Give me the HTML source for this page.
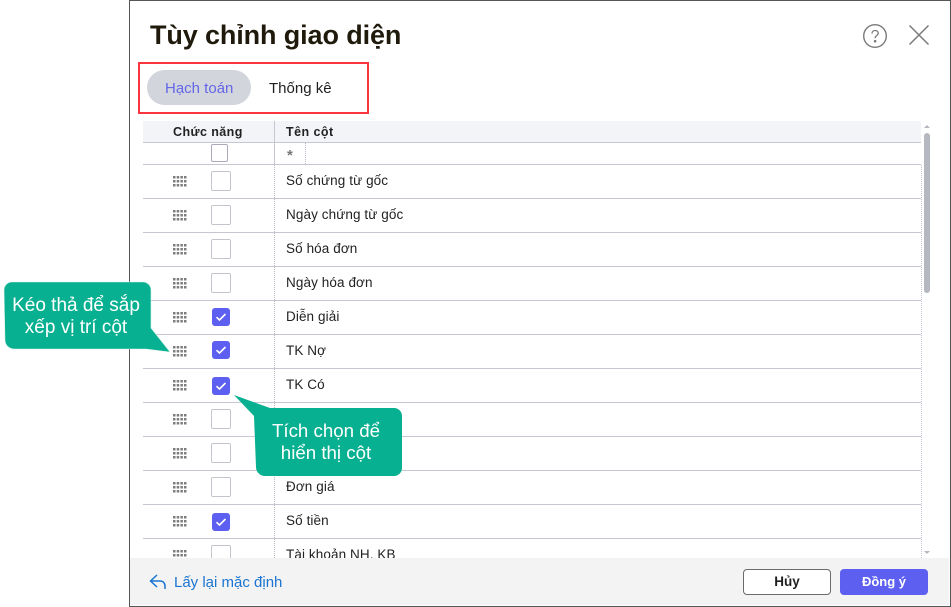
<!DOCTYPE html>
<html>
<head>
<meta charset="utf-8">
<style>
html,body{margin:0;padding:0;background:#fff}
body{width:951px;height:607px;position:relative;overflow:hidden;font-family:"Liberation Sans","Noto Sans CJK JP",sans-serif;color:#1f1f1f}
.a{position:absolute}
#dlg{left:129px;top:0;width:820px;height:605px;border:1px solid #555;background:#fff}
.line{position:absolute;left:143px;width:778px;height:1px;background:#c6c7d3}
.t{position:absolute;left:286px;font-size:13.5px;line-height:16px;white-space:nowrap;letter-spacing:.1px;color:#222}
.cb{position:absolute;left:211px;width:18px;height:18px;border:1px solid #c4c5cc;border-radius:2px;background:#fff}
.ck{position:absolute;left:212px;width:18px;height:18px;border-radius:3px;background:#5c5fef}
.ck svg{position:absolute;left:0;top:0}
.h{position:absolute;left:173px}
</style>
</head>
<body>
<div class="a" id="dlg"></div>

<div class="a" style="left:150px;top:18px;font-size:27px;line-height:34px;font-weight:bold;color:#1f1a0c;white-space:nowrap;letter-spacing:-.12px">Tùy chỉnh giao diện</div>

<svg class="a" style="left:862px;top:23px" width="26" height="26" viewBox="0 0 26 26" fill="none" stroke="#7a7a7a" stroke-width="1.4">
<circle cx="13" cy="13" r="11.3"/>
<path d="M10 10.6c0-2 1.3-3.1 3.1-3.1s3.1 1.1 3.1 2.8c0 2.3-3.1 2.3-3.1 4.8" stroke-width="1.3"/>
<circle cx="13.1" cy="18.2" r=".6" fill="#7a7a7a"/>
</svg>
<svg class="a" style="left:908px;top:24px" width="22" height="22" viewBox="0 0 22 22" fill="none" stroke="#7a7a7a" stroke-width="1.5">
<path d="M1.5 1.5l19 19M20.5 1.5l-19 19"/>
</svg>

<div class="a" style="left:138px;top:62px;width:227px;height:48px;border:2px solid #f8353d"></div>
<div class="a" style="left:147px;top:70px;width:104px;height:35px;border-radius:18px;background:#d2d5dc"></div>
<div class="a" style="left:165px;top:80px;font-size:15px;line-height:18px;color:#6466e8;white-space:nowrap">Hạch toán</div>
<div class="a" style="left:269px;top:80px;font-size:15px;line-height:18px;color:#1f1f1f;white-space:nowrap">Thống kê</div>

<div class="a" style="left:143px;top:121px;width:778px;height:21px;background:#f3f4f8"></div>
<div class="a" style="left:173px;top:125px;font-size:12.5px;line-height:15px;font-weight:bold;color:#222;white-space:nowrap;letter-spacing:.42px">Chức năng</div>
<div class="a" style="left:286px;top:125px;font-size:12.5px;line-height:15px;font-weight:bold;color:#222;white-space:nowrap;letter-spacing:.45px">Tên cột</div>

<div class="a" style="left:274px;top:121px;width:1px;height:44px;background:#c6c7d3"></div>
<div class="a" style="left:274px;top:165px;width:0;height:393px;border-left:1px dotted #b8b9c6"></div>
<div class="a" style="left:305px;top:143px;width:0;height:21px;border-left:1px dotted #b8b9c6"></div>
<div class="a" style="left:921px;top:165px;width:0;height:393px;border-left:1px dotted #c6c7d3"></div>

<div class="line" style="top:142px"></div>
<div class="line" style="top:164px"></div>
<div class="line" style="top:198px"></div>
<div class="line" style="top:232px"></div>
<div class="line" style="top:266px"></div>
<div class="line" style="top:300px"></div>
<div class="line" style="top:334px"></div>
<div class="line" style="top:368px"></div>
<div class="line" style="top:402px"></div>
<div class="line" style="top:436px"></div>
<div class="line" style="top:470px"></div>
<div class="line" style="top:504px"></div>
<div class="line" style="top:538px"></div>

<div class="a" style="left:211px;top:144px;width:15px;height:16px;border:1px solid #a9abba;border-radius:2px"></div>
<div class="a" style="left:287px;top:148px;font-size:15px;line-height:16px;font-weight:bold;color:#777">*</div>

<svg width="0" height="0" style="position:absolute"><defs>
<g id="dots" fill="#7d7d7d"><rect x="0" y="0" width="2.5" height="2.5"/><rect x="3.7" y="0" width="2.5" height="2.5"/><rect x="7.4" y="0" width="2.5" height="2.5"/><rect x="11" y="0" width="2.5" height="2.5"/><rect x="0" y="4" width="2.5" height="2.5"/><rect x="3.7" y="4" width="2.5" height="2.5"/><rect x="7.4" y="4" width="2.5" height="2.5"/><rect x="11" y="4" width="2.5" height="2.5"/><rect x="0" y="8" width="2.5" height="2.5"/><rect x="3.7" y="8" width="2.5" height="2.5"/><rect x="7.4" y="8" width="2.5" height="2.5"/><rect x="11" y="8" width="2.5" height="2.5"/></g>
<path id="tick" d="M4.5 9.2l3 2.8 6-6" fill="none" stroke="#fff" stroke-width="1.6"/>
</defs></svg>

<svg class="h" style="top:176px" width="14" height="11"><use href="#dots"/></svg>
<svg class="h" style="top:210px" width="14" height="11"><use href="#dots"/></svg>
<svg class="h" style="top:244px" width="14" height="11"><use href="#dots"/></svg>
<svg class="h" style="top:278px" width="14" height="11"><use href="#dots"/></svg>
<svg class="h" style="top:312px" width="14" height="11"><use href="#dots"/></svg>
<svg class="h" style="top:346px" width="14" height="11"><use href="#dots"/></svg>
<svg class="h" style="top:380px" width="14" height="11"><use href="#dots"/></svg>
<svg class="h" style="top:414px" width="14" height="11"><use href="#dots"/></svg>
<svg class="h" style="top:448px" width="14" height="11"><use href="#dots"/></svg>
<svg class="h" style="top:482px" width="14" height="11"><use href="#dots"/></svg>
<svg class="h" style="top:516px" width="14" height="11"><use href="#dots"/></svg>
<svg class="h" style="top:550px" width="14" height="11"><use href="#dots"/></svg>

<div class="cb" style="top:171px"></div>
<div class="cb" style="top:205px"></div>
<div class="cb" style="top:239px"></div>
<div class="cb" style="top:273px"></div>
<div class="ck" style="top:308px"><svg width="18" height="18"><use href="#tick"/></svg></div>
<div class="ck" style="top:341px"><svg width="18" height="18"><use href="#tick"/></svg></div>
<div class="ck" style="top:377px"><svg width="18" height="18"><use href="#tick"/></svg></div>
<div class="cb" style="top:409px"></div>
<div class="cb" style="top:443px"></div>
<div class="cb" style="top:477px"></div>
<div class="ck" style="top:513px"><svg width="18" height="18"><use href="#tick"/></svg></div>
<div class="cb" style="top:545px"></div>

<div class="t" style="top:173px">Số chứng từ gốc</div>
<div class="t" style="top:207px">Ngày chứng từ gốc</div>
<div class="t" style="top:241px">Số hóa đơn</div>
<div class="t" style="top:275px">Ngày hóa đơn</div>
<div class="t" style="top:309px">Diễn giải</div>
<div class="t" style="top:343px">TK Nợ</div>
<div class="t" style="top:377px">TK Có</div>
<div class="t" style="top:479px">Đơn giá</div>
<div class="t" style="top:513px">Số tiền</div>
<div class="t" style="top:547px">Tài khoản NH, KB</div>

<div class="a" style="left:924px;top:125px;width:0;height:0;border-left:3px solid transparent;border-right:3px solid transparent;border-bottom:3px solid #b5b8c0"></div>
<div class="a" style="left:924px;top:133px;width:6px;height:160px;border-radius:3px;background:#b5b8c0"></div>
<div class="a" style="left:924px;top:551px;width:0;height:0;border-left:3px solid transparent;border-right:3px solid transparent;border-top:3px solid #b5b8c0"></div>

<div class="a" style="left:130px;top:558px;width:819px;height:47px;background:#f3f3f3"></div>
<svg class="a" style="left:149px;top:573px" width="18" height="17" viewBox="0 0 18 17" fill="none" stroke="#1a74d2" stroke-width="1.5">
<path d="M8 2L1.5 8 8 14M1.5 8H11c3 0 5 2 5 5v3"/>
</svg>
<div class="a" style="left:174px;top:574px;font-size:15px;line-height:17px;color:#1a74d2;white-space:nowrap">Lấy lại mặc định</div>
<div class="a" style="left:743px;top:569px;width:86px;height:24px;border:1px solid #6a6a6a;border-radius:4px;background:#fff;font-size:13.5px;line-height:24px;font-weight:bold;text-align:center;color:#1f1f1f">Hủy</div>
<div class="a" style="left:840px;top:569px;width:88px;height:26px;border-radius:4px;background:#5c5fef;font-size:13px;line-height:26px;font-weight:bold;text-align:center;color:#fff">Đồng ý</div>

<svg class="a" style="left:0;top:280px" width="175" height="76" viewBox="0 0 175 76">
<path d="M12 2H143a8 8 0 0 1 8 8V48L170 72 146 69H14a9 9 0 0 1-9-9L4 10a8 8 0 0 1 8-8z" fill="#07b090" stroke="#d8f2ec" stroke-width=".6"/>
</svg>
<div class="a" style="left:-4px;top:295px;width:160px;text-align:center;font-size:19px;line-height:22px;color:#fff;white-space:nowrap">Kéo thả để sắp<br>xếp vị trí cột</div>

<svg class="a" style="left:232px;top:392px" width="175" height="90" viewBox="0 0 175 90">
<path d="M2 3L38 16H162a8 8 0 0 1 8 8V76a8 8 0 0 1-8 8H33a9 9 0 0 1-9-9L22 24z" fill="#07b090"/>
</svg>
<div class="a" style="left:246px;top:420px;width:160px;text-align:center;font-size:18.7px;line-height:22px;color:#fff;white-space:nowrap">Tích chọn để<br>hiển thị cột</div>
</body>
</html>
